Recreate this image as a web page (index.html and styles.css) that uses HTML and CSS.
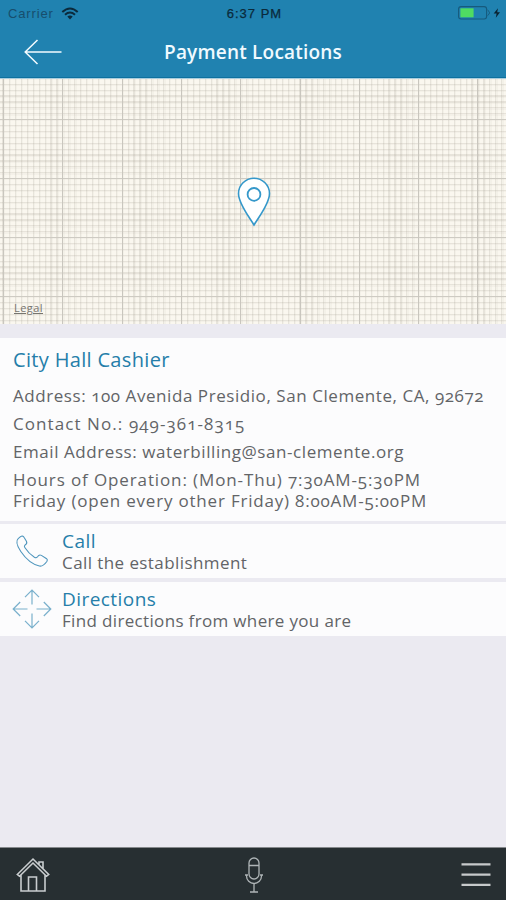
FILE: index.html
```html
<!DOCTYPE html>
<html lang="en">
<head>
<meta charset="utf-8">
<title>Payment Locations</title>
<link rel="stylesheet" href="styles.css">
</head>
<body>
<div class="app">
  <header class="header">
    <div class="status">
      <div class="carrier"><span>Carrier</span>
        <svg width="18" height="13" viewBox="0 0 18 13" fill="none" stroke="#0b2a3c" stroke-width="2"><path d="M1.3 5Q9-2 16.7 5M4 7.7Q9 3.3 14 7.7"/><path d="M6.3 9.4Q9 7.4 11.7 9.4L9 12.4Z" fill="#0b2a3c" stroke="none"/></svg>
      </div>
      <div class="time">6:37 PM</div>
      <div class="power">
        <svg width="43" height="14" viewBox="0 0 43 14"><rect x=".6" y=".6" width="28" height="12.4" rx="2.5" fill="none" stroke="#165a7d" stroke-width="1.1"/><rect x="2.4" y="2.3" width="13.2" height="9" fill="#4fdc62"/><path d="M29.5 4Q33.5 6.8 29.5 9.6" fill="none" stroke="#165a7d"/><path d="M40 2.2L35.7 7.6H38.6L37.8 11.8L42 6.2H39.2Z" fill="#0a2230"/></svg>
      </div>
    </div>
    <div class="nav">
      <svg class="back" width="38" height="26" viewBox="0 0 38 26" fill="none" stroke="#f2fbff" stroke-width="1.5"><path d="M37.5 13H1M13.5 1L1.2 13L13.5 25"/></svg>
      <h1>Payment Locations</h1>
    </div>
  </header>
  <section class="map">
    <svg class="pin" width="34" height="50" viewBox="0 0 34 50" fill="#fff" stroke="#3598ca" stroke-width="1.6"><path d="M17 48C13 41 1.5 27 1.5 16.5A15.5 15.2 0 0 1 32.5 16.5C32.5 27 21 41 17 48Z"/><circle cx="17" cy="17.4" r="6.4" stroke-width="1.8"/></svg>
    <a class="legal">Legal</a>
  </section>
  <section class="details">
    <h2>City Hall Cashier</h2>
    <p class="address">Address: 100 Avenida Presidio, San Clemente, CA, 92672</p>
    <p class="contact">Contact No.: 949-361-8315</p>
    <p class="email">Email Address: waterbilling@san-clemente.org</p>
    <p class="hours">Hours of Operation: (Mon-Thu) 7:30AM-5:30PM</p>
    <p class="friday">Friday (open every other Friday) 8:00AM-5:00PM</p>
  </section>
  <section class="action">
    <svg width="40" height="40" viewBox="0 0 40 40" fill="none" stroke="#4f96bd" stroke-width="1.1"><path transform="translate(0 1)" d="M8.5 4.7L6.2 6.6C3.8 8.7 5.3 14.2 8.8 19.5C13.5 26.4 20.3 32.4 27.4 34C29.6 34.6 32 33.4 35 29.2C35.6 28.2 35.4 27.4 34.6 26.7L29.4 23.4C27.8 22.4 26.7 22.9 25.5 24.8C24.6 26.1 23.7 26.1 22.4 25.3C18.5 22.7 15.2 19.3 12.8 15.5C12 14.2 12.2 13.6 13.1 13C15 11.8 15.3 10.8 14.4 9.2L12 5.3C11.2 3.9 9.9 3.7 8.5 4.7Z"/></svg>
    <div><h3 class="call">Call</h3><p class="call-text">Call the establishment</p></div>
  </section>
  <section class="action directions">
    <svg width="40" height="40" viewBox="0 0 40 40" fill="none" stroke="#79b0cc" stroke-width="1.2"><path d="M20 15.5V1.2M13 8.2L20 1.2L27 8.2M20 24.5V38.8M13 31.8L20 38.8L27 31.8M15.5 20H1.2M8.2 13L1.2 20L8.2 27M24.5 20H38.8M31.8 13L38.8 20L31.8 27"/></svg>
    <div><h3 class="dir">Directions</h3><p class="dir-text">Find directions from where you are</p></div>
  </section>
  <footer class="tabs">
    <svg width="34" height="36" viewBox="0 0 34 36" fill="none" stroke="#c9cdcf" stroke-width="1.6"><path d="M1.3 17.5L17 2L32.7 17.5L30.5 19.3L17 6L3.5 19.3ZM5 18V34H29V18M12.5 34V20H20.5V34M23 7.5V5H27V12"/></svg>
    <svg width="18" height="36" viewBox="0 0 18 36" fill="none" stroke="#aeb4b6" stroke-width="1.3"><rect x="4" y="1" width="10" height="21" rx="5"/><path d="M4 8.5H14M1.5 17.5V19A7.5 7.5 0 0 0 16.5 19V17.5M0 18H3M15 18H18M9 26V34.5M5 35H13"/></svg>
    <svg width="30" height="36" viewBox="0 0 30 36" stroke="#c7cacb" stroke-width="2.2"><path d="M.5 7.4H29.5M.5 17.6H29.5M.5 27.8H29.5"/></svg>
  </footer>
</div>
</body>
</html>
```
FILE: styles.css
```css
* { box-sizing: border-box; }
body, h1, h2, h3, p { margin: 0; }
body { font-family: "Open Sans", "Noto Sans", sans-serif; font-variant-numeric: oldstyle-nums; white-space: nowrap; background: #272f32; }
.app { width: 506px; height: 900px; display: flex; flex-direction: column; background: #ebeaf1; overflow: hidden; }
.header { flex: none; height: 79px; background: #2082b0; border-bottom: 1px solid #a9cddd; box-shadow: inset 0 -1px #0d719f; }
.status { height: 26px; display: grid; grid-template-columns: 1fr auto 1fr; align-items: center; padding: 0 5px 0 8px; font: 13px "Liberation Sans", sans-serif; }
.carrier { display: flex; gap: 7px; align-items: center; color: #174e6d; letter-spacing: .85px; }
.carrier span { width: 46px; }
.time { color: #0a2a3b; letter-spacing: 1px; -webkit-text-stroke: .25px; }
.power { display: flex; justify-content: flex-end; }
.nav { height: 52px; display: grid; grid-template-columns: 1fr auto 1fr; align-items: center; padding: 0 24px; }
h1 { color: #f0faff; font-size: 19px; line-height: 26px; font-weight: 600; letter-spacing: .2px; }
.map {
  flex: none; height: 245px; display: grid; grid-template-rows: 1fr auto; justify-items: center;
  padding: 98px 14px 8px; background-color: #faf7ef;
  background-image:
    repeating-linear-gradient(90deg, #c9c6be 0 1px, transparent 1px 59.3px),
    repeating-linear-gradient(#cecbc3 0 1px, transparent 1px 59px),
    repeating-linear-gradient(90deg, #a39d9038 0 1.2px, #a39d9012 1.2px 2.4px, transparent 2.4px 5.93px),
    repeating-linear-gradient(#a39d9038 0 1.2px, #a39d9012 1.2px 2.4px, transparent 2.4px 5.9px);
  background-position: 3px 0, 0 -19px, 3px 0, 0 -19px;
  background-size: 600px 300px;
}
.pin { margin-left: 2px; }
.legal { justify-self: start; color: #77756f; font-size: 11px; line-height: 16px; text-decoration: underline; letter-spacing: .45px; }
.details { flex: none; height: 183px; margin-top: 14px; padding: 9px 13px 0; background: #fcfcfd; color: #626467; font-size: 17px; }
h2 { color: #257ea9; font-size: 20px; font-weight: 400; line-height: 26px; letter-spacing: .33px; }
p { line-height: 21px; }
.details p { margin-bottom: 7px; }
.details .address { margin-top: 12px; letter-spacing: .56px; }
.details .contact { letter-spacing: 1.08px; }
.details .email { letter-spacing: .57px; }
.details .hours { margin-bottom: 0; letter-spacing: .88px; }
.details .friday { letter-spacing: .8px; }
.action { flex: none; height: 54px; margin-top: 3px; display: flex; align-items: center; gap: 10px; padding: 0 12px; background: #fcfcfd; color: #626467; font-size: 17px; }
.action div { padding-top: 2px; }
.action.directions { margin-top: 4px; }
h3 { color: #257ea9; font-size: 19px; font-weight: 400; line-height: 21px; letter-spacing: .45px; }
.call-text { letter-spacing: .42px; }
.dir-text { letter-spacing: .34px; }
.tabs { flex: none; height: 53px; margin-top: auto; display: grid; grid-template-columns: 1fr auto 1fr; align-items: center; padding: 2px 15px 0 16px; background: #272f32; border-top: 1px solid #86898c; }
.tabs svg:last-child { justify-self: end; }
```
